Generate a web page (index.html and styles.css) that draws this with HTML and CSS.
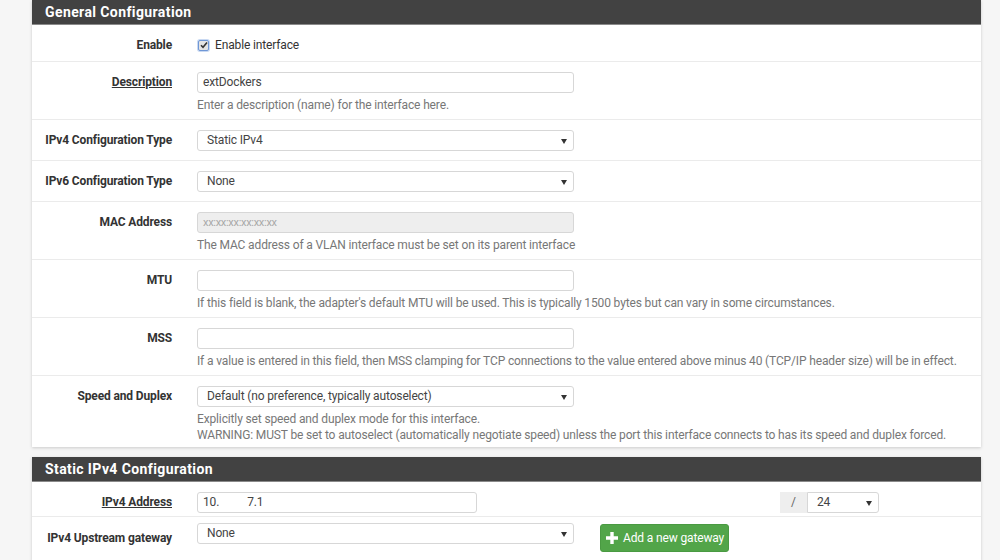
FILE: index.html
```html
<!DOCTYPE html>
<html lang="en-us">
  <head>
    <meta charset="utf-8">
    <title>Interfaces / extDockers</title>

    <link rel="stylesheet" href="styles.css">
  </head>
  <body>
    <main class="page">

      <!-- general settings -->
      <section class="panel">
        <h2 class="panelHead">General Configuration</h2>

        <div class="row rowCheck">
          <div class="label">Enable</div>
          <div class="field">
            <label class="check">
              <span class="box"><svg width="8" height="8" viewBox="0 0 8 8"><path d="M1 4.2l2 2L7 1.5" fill="none" stroke="#333" stroke-width="1.6"/></svg></span>
              Enable interface
            </label>
          </div>
        </div>

        <div class="row">
          <div class="label"><span class="link">Description</span></div>
          <div class="field">
            <div class="input text">extDockers</div>
            <div class="help">Enter a description (name) for the interface here.</div>
          </div>
        </div>

        <div class="row">
          <div class="label">IPv4 Configuration Type</div>
          <div class="field">
            <div class="input select">Static IPv4</div>
          </div>
        </div>

        <div class="row">
          <div class="label">IPv6 Configuration Type</div>
          <div class="field">
            <div class="input select">None</div>
          </div>
        </div>

        <div class="row">
          <div class="label">MAC Address</div>
          <div class="field">
            <div class="input disabled">xx:xx:xx:xx:xx:xx</div>
            <div class="help">The MAC address of a VLAN interface must be set on its parent interface</div>
          </div>
        </div>

        <div class="row">
          <div class="label">MTU</div>
          <div class="field">
            <div class="input"></div>
            <div class="help">If this field is blank, the adapter's default MTU will be used. This is typically 1500 bytes but can vary in some circumstances.</div>
          </div>
        </div>

        <div class="row">
          <div class="label">MSS</div>
          <div class="field">
            <div class="input"></div>
            <div class="help">If a value is entered in this field, then MSS clamping for TCP connections to the value entered above minus 40 (TCP/IP header size) will be in effect.</div>
          </div>
        </div>

        <div class="row last">
          <div class="label">Speed and Duplex</div>
          <div class="field">
            <div class="input select">Default (no preference, typically autoselect)</div>
            <div class="help">Explicitly set speed and duplex mode for this interface.<br>WARNING: MUST be set to autoselect (automatically negotiate speed) unless the port this interface connects to has its speed and duplex forced.</div>
          </div>
        </div>
      </section>

      <!-- static ipv4 -->
      <section class="panel">
        <h2 class="panelHead">Static IPv4 Configuration</h2>

        <div class="row rowAddr">
          <div class="label"><span class="link">IPv4 Address</span></div>
          <div class="field fieldInline">
            <div class="input text short">10.<span class="blank"></span>7.1</div>
            <div class="cidr">
              <span class="addon">/</span>
              <div class="input select mask">24</div>
            </div>
          </div>
        </div>

        <div class="row rowGw">
          <div class="label">IPv4 Upstream gateway</div>
          <div class="field fieldInline">
            <div class="input select">None</div>
            <button class="btnAdd">
              <svg width="12" height="12" viewBox="0 0 12 12"><path d="M4.3 0h3.4v4.3H12v3.4H7.7V12H4.3V7.7H0V4.3h4.3z" fill="#fff"/></svg>
              Add a new gateway
            </button>
          </div>
        </div>
      </section>

    </main>
  </body>
</html>
```

FILE: styles.css
```css
body {
  margin: 0;
  background: #f6f6f6;
  font-family: Roboto, "Liberation Sans", sans-serif;
  font-size: 12px;
  letter-spacing: -0.14px;
  color: #333333;
}

.page {
  width: 949px;
  margin-left: 32px;
}

.panel {
  background: #ffffff;
  box-shadow: 0 1px 3px rgba(0, 0, 0, 0.18);
  margin-bottom: 10px;
}

.panelHead {
  margin: 0;
  height: 24px;
  line-height: 24px;
  padding-left: 13px;
  background: #424242;
  border-bottom: 1px solid #8a8a8a;
  color: #ffffff;
  font-size: 14px;
  font-weight: bold;
  letter-spacing: 0.4px;
}

.row {
  display: flex;
  padding: 10px 0 9px;
  border-bottom: 1px solid #ebebeb;
}

.row.last {
  border-bottom: none;
  padding-bottom: 7px;
}

.rowCheck {
  padding: 12px 0 8px;
}

.label {
  width: 140px;
  padding-right: 25px;
  text-align: right;
  font-weight: bold;
  line-height: 21px;
  flex-shrink: 0;
}

.rowCheck .label {
  line-height: 16px;
}

.link {
  text-decoration: underline;
}

.field {
  flex: 1;
}

.fieldInline {
  display: flex;
  align-items: flex-start;
}

.check {
  display: flex;
  align-items: center;
  height: 16px;
  gap: 6px;
}

.box {
  box-sizing: border-box;
  display: flex;
  align-items: center;
  justify-content: center;
  width: 11px;
  height: 11px;
  margin-left: 1px;
  border: 1px solid #6f97d6;
  border-radius: 2px;
  background: #e4e4e4;
  box-shadow: 0 0 0 1px #c9d9f2;
}

.input {
  box-sizing: border-box;
  position: relative;
  width: 377px;
  height: 21px;
  line-height: 19px;
  padding: 0 9px;
  border: 1px solid #d7d7d7;
  border-radius: 3px;
  background: #ffffff;
  color: #444444;
  white-space: nowrap;
}

.text {
  padding-left: 5px;
}

.select::after {
  content: "";
  position: absolute;
  right: 6px;
  top: 8px;
  border-left: 3px solid transparent;
  border-right: 3px solid transparent;
  border-top: 5px solid #333333;
}

.disabled {
  background: #eeeeee;
  color: #a8a8a8;
  font-size: 11px;
  letter-spacing: -0.3px;
  padding-left: 5px;
}

.help {
  margin: 4px 0 -3px;
  line-height: 16px;
  color: #777777;
}

.rowAddr {
  padding: 10px 0 3px;
}

.short {
  width: 280px;
}

.blank {
  display: inline-block;
  width: 28px;
}

.cidr {
  display: flex;
  margin-left: 303px;
}

.addon {
  box-sizing: border-box;
  width: 27px;
  height: 21px;
  line-height: 21px;
  text-align: center;
  background: #eeeeee;
  color: #666666;
}

.mask {
  width: 72px;
  border-top-left-radius: 0;
  border-bottom-left-radius: 0;
}

.rowGw {
  padding: 6px 0 8px;
  border-bottom: none;
}

.rowGw .label {
  line-height: 29px;
  padding-top: 1px;
}

.btnAdd {
  display: flex;
  align-items: center;
  gap: 5px;
  margin: 1px 0 0 26px;
  height: 28px;
  padding: 0 4px 0 5px;
  background: #52a549;
  border: 1px solid #4a9a42;
  border-radius: 3px;
  color: #ffffff;
  font-family: Roboto, "Liberation Sans", sans-serif;
  font-size: 12px;
  letter-spacing: -0.14px;
}
```
